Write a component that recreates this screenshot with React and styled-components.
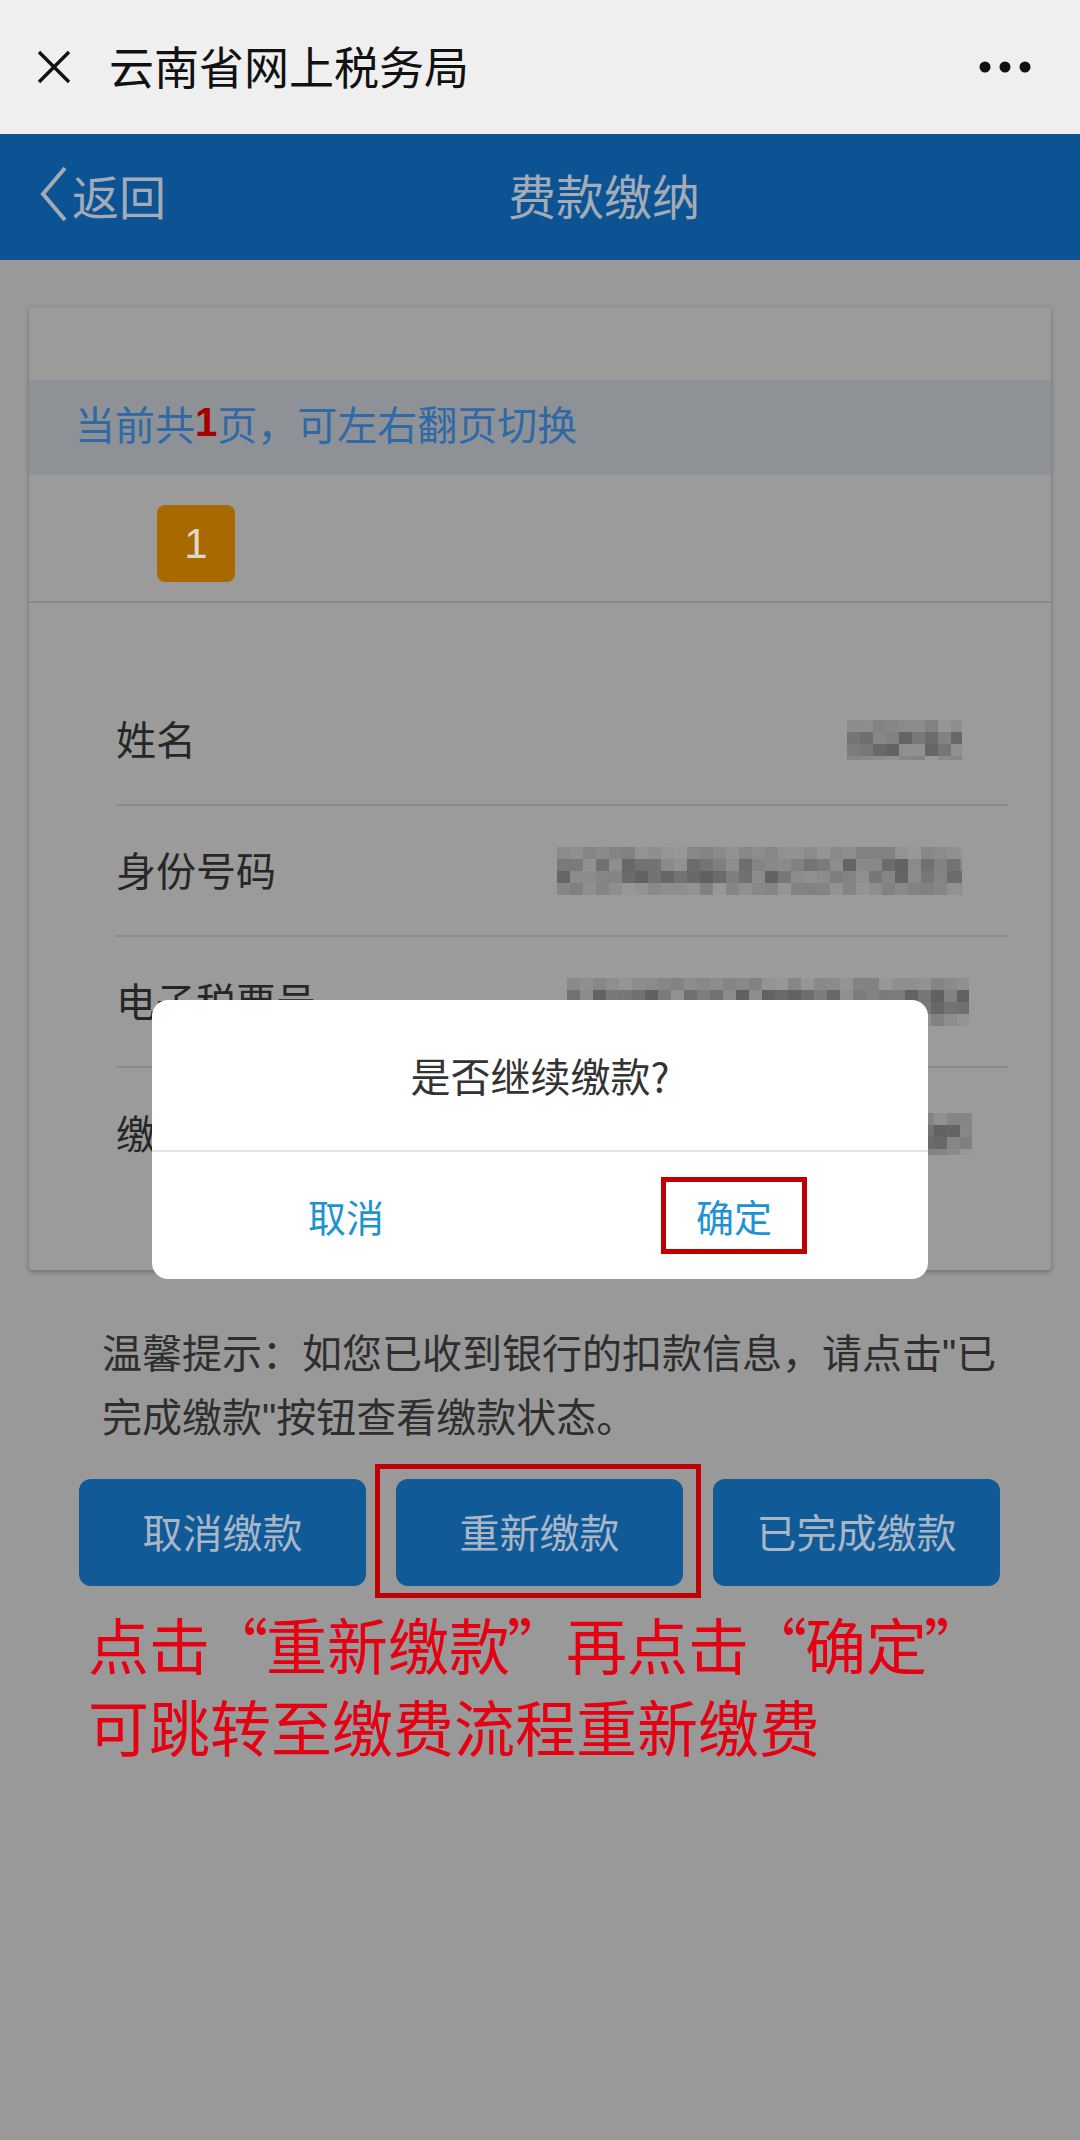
import React from 'react';
import styled, { createGlobalStyle } from 'styled-components';

const GlobalStyle = createGlobalStyle`
  html, body { margin: 0; padding: 0; background: #999999; }
  body { font-family: "Noto Sans CJK SC", "Noto Sans", sans-serif; }
  * { box-sizing: border-box; }
`;

const Page = styled.div`
  position: relative;
  width: 1080px;
  min-height: 2140px;
  background: #999999;
  display: flex;
  flex-direction: column;
`;

// barra do wechat
const TopBar = styled.div`
  height: 134px;
  background: #efefef;
  display: flex;
  align-items: center;
  padding: 0 49px 0 36px;
`;

const TopTitle = styled.div`
  flex: 1;
  margin-left: 37px;
  font-size: 45px;
  line-height: 1;
  color: #111111;
  padding-bottom: 3px;
`;

const NavBar = styled.div`
  height: 126px;
  background: #0b5393;
  display: flex;
  align-items: center;
  padding: 0 0 6px 39px;
  color: #a3abb6;
`;

const Back = styled.div`
  display: flex;
  align-items: center;
  gap: 5px;
  font-size: 47px;
  line-height: 1;
`;

const NavTitle = styled.div`
  margin-left: ${p => p.$offset}px;
  font-size: 48px;
  line-height: 1;
`;

const Card = styled.div`
  margin: 47px 29px 0;
  height: 963px;
  background: #9b9b9b;
  border-radius: 4px;
  box-shadow: 0 2px 5px rgba(0, 0, 0, 0.28);
  padding-top: 73px;
`;

const PageHint = styled.div`
  height: 95px;
  background: #8e9296;
  display: flex;
  align-items: center;
  padding: 0 0 10px 46px;
  font-size: 40px;
  color: #2f69a6;
`;

const HintNum = styled.b`
  font-family: "Liberation Sans", sans-serif;
  font-weight: 700;
  color: #a60000;
`;

const TabRow = styled.div`
  height: 128px;
  border-bottom: 2px solid #898989;
  padding: 30px 0 0 128px;
`;

const TabBox = styled.div`
  width: 78px;
  height: 77px;
  border-radius: 8px;
  background: #a86a00;
  color: #e2d8ca;
  font-family: "Liberation Sans", sans-serif;
  font-size: 42px;
  display: flex;
  align-items: center;
  justify-content: center;
`;

const Rows = styled.div`
  padding: 72px 43px 0 87px;
`;

const Row = styled.div`
  height: 131px;
  display: flex;
  align-items: center;
  justify-content: space-between;
  padding-right: ${p => p.$pad}px;
  border-bottom: ${p => (p.$last ? 'none' : '2px solid #8b8b8b')};
`;

const Label = styled.span`
  font-size: 40px;
  color: #262626;
  padding-bottom: 4px;
`;

const Tip = styled.p`
  margin: 52px 62px 0 102px;
  font-family: "Liberation Sans", "Noto Sans CJK SC", sans-serif;
  font-size: 40px;
  line-height: 64px;
  color: #2e2e2e;
`;

const Buttons = styled.div`
  margin-top: 29px;
  padding: 0 80px 0 79px;
  display: grid;
  grid-template-columns: repeat(3, 1fr);
  gap: 30px;
`;

const ActionButton = styled.button`
  position: relative;
  height: 107px;
  border: none;
  border-radius: 12px;
  background: #115a98;
  color: #a9b6c6;
  font-family: "Noto Sans CJK SC", sans-serif;
  font-size: 40px;
  padding: 0 0 4px;

  &::after {
    content: '';
    display: ${p => (p.$marked ? 'block' : 'none')};
    position: absolute;
    top: -15px;
    right: -18px;
    bottom: -12px;
    left: -21px;
    border: 5px solid #c00000;
  }
`;

const Note = styled.div`
  margin-top: 17px;
  padding-left: 88px;
  font-size: 61px;
  line-height: 82px;
  color: #e50012;
  white-space: nowrap;
`;

const Quote = styled.span`
  margin: 0 -2px 0 -3px;
`;

const Modal = styled.div`
  position: absolute;
  top: 1000px;
  left: 152px;
  width: 776px;
  height: 279px;
  border-radius: 16px;
  background: #ffffff;
  display: flex;
  flex-direction: column;
  overflow: hidden;
`;

const ModalBody = styled.div`
  height: 152px;
  display: flex;
  align-items: center;
  justify-content: center;
  border-bottom: 2px solid #e4e4e4;
  font-size: 40px;
  color: #333333;
`;

const ModalActions = styled.div`
  flex: 1;
  display: grid;
  grid-template-columns: 1fr 1fr;
`;

const ModalAction = styled.div`
  display: flex;
  align-items: center;
  justify-content: center;
  font-size: 38px;
  color: #1e93d4;
`;

const Marked = styled.span`
  display: inline-block;
  border: 5px solid #c00000;
  padding: 10px 30px;
  line-height: 47px;
`;

const CloseIcon = () => (
  <svg width="36" height="36" viewBox="0 0 36 36">
    <path d="M3 3 L33 33 M33 3 L3 33" stroke="#111" strokeWidth="3.4" fill="none" />
  </svg>
);

const MoreIcon = () => (
  <svg width="52" height="12" viewBox="0 0 52 12">
    <circle cx="6" cy="6" r="5.5" fill="#111" />
    <circle cx="26" cy="6" r="5.5" fill="#111" />
    <circle cx="46" cy="6" r="5.5" fill="#111" />
  </svg>
);

const Chevron = () => (
  <svg width="28" height="56" viewBox="0 0 28 56">
    <path d="M26 2 L4 28 L26 54" stroke="#a3abb6" strokeWidth="4" fill="none" />
  </svg>
);

// mosaico dos dados ocultos
const Mosaic = ({ w, h, seed }) => {
  const cw = 13;
  const ch = 12;
  const cols = Math.ceil(w / cw);
  const rows = Math.ceil(h / ch);
  let s = seed;
  const rnd = () => {
    s = (s * 9301 + 49297) % 233280;
    return s / 233280;
  };
  const cells = [];
  for (let r = 0; r < rows; r++) {
    for (let c = 0; c < cols; c++) {
      const edge = r === 0 || r === rows - 1;
      const v = Math.round(edge ? 128 + rnd() * 24 : 96 + rnd() * 50);
      cells.push(
        <rect key={r + '-' + c} x={c * cw} y={r * ch} width={cw} height={ch} fill={`rgb(${v},${v},${v})`} />
      );
    }
  }
  return (
    <svg width={w} height={h} viewBox={`0 0 ${w} ${h}`}>
      {cells}
    </svg>
  );
};

const dados = [
  { label: '姓名', w: 115, h: 40, seed: 7, pad: 46 },
  { label: '身份号码', w: 405, h: 48, seed: 31, pad: 46 },
  { label: '电子税票号', w: 402, h: 48, seed: 55, pad: 39 },
  { label: '缴款金额', w: 402, h: 42, seed: 93, pad: 36 },
];

function App() {
  return (
    <Page>
      <GlobalStyle />
      <TopBar>
        <CloseIcon />
        <TopTitle>云南省网上税务局</TopTitle>
        <MoreIcon />
      </TopBar>

      <NavBar>
        <Back>
          <Chevron />
          <span>返回</span>
        </Back>
        <NavTitle $offset={342}>费款缴纳</NavTitle>
      </NavBar>

      <Card>
        <PageHint>
          当前共<HintNum>1</HintNum>页，可左右翻页切换
        </PageHint>
        <TabRow>
          <TabBox>1</TabBox>
        </TabRow>
        <Rows>
          {dados.map((d, i) => (
            <Row key={d.label} $pad={d.pad} $last={i === dados.length - 1}>
              <Label>{d.label}</Label>
              <Mosaic w={d.w} h={d.h} seed={d.seed} />
            </Row>
          ))}
        </Rows>
      </Card>

      <Tip>温馨提示：如您已收到银行的扣款信息，请点击"已完成缴款"按钮查看缴款状态。</Tip>

      <Buttons>
        <ActionButton>取消缴款</ActionButton>
        <ActionButton $marked>重新缴款</ActionButton>
        <ActionButton>已完成缴款</ActionButton>
      </Buttons>

      <Note>
        点击<Quote>“</Quote>重新缴款<Quote>”</Quote>再点击<Quote>“</Quote>确定<Quote>”</Quote>
        <br />
        可跳转至缴费流程重新缴费
      </Note>

      <Modal>
        <ModalBody>是否继续缴款?</ModalBody>
        <ModalActions>
          <ModalAction>取消</ModalAction>
          <ModalAction>
            <Marked>确定</Marked>
          </ModalAction>
        </ModalActions>
      </Modal>
    </Page>
  );
}

export default App;
